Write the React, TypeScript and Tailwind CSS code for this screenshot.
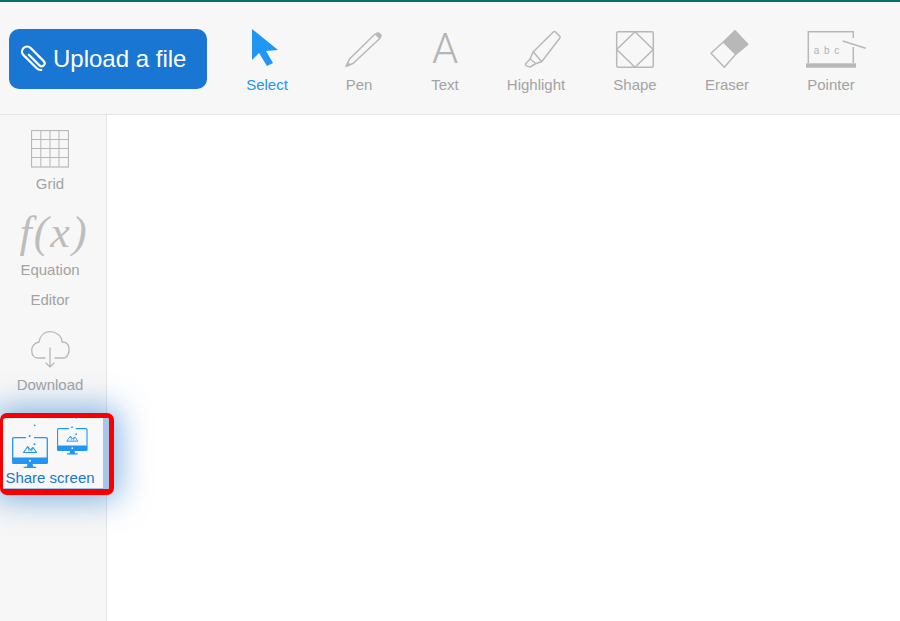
import React from "react";

const C = "#b8b8b8";

function Tool({ label, width, active, children }: { label: string; width: string; active?: boolean; children: React.ReactNode }) {
  return (
    <div className={`flex flex-col items-center shrink-0 ${width}`}>
      <div className="h-10 flex items-center justify-center">{children}</div>
      <div className={`mt-1.5 text-[15px] leading-5 ${active ? "text-[#2196f3]" : "text-[#a3a3a3]"}`}>{label}</div>
    </div>
  );
}

function Ico({ children }: { children: React.ReactNode }) {
  return (
    <svg width="60" height="40" viewBox="0 0 60 40" fill="none" className="overflow-visible">
      {children}
    </svg>
  );
}

function SideItem({ children, lines }: { children: React.ReactNode; lines: string[] }) {
  return (
    <div className="w-[100px] flex flex-col items-center">
      {children}
      {lines.map((l) => (
        <div key={l} className="text-[15px] leading-[30px] text-[#a3a3a3] text-center">
          {l}
        </div>
      ))}
    </div>
  );
}

function Monitor({ x, y, s }: { x: number; y: number; s: number }) {
  return (
    <g transform={`translate(${x} ${y}) scale(${s})`}>
      <path d="M14 0.700H2Q0.700 0.700 0.700 2V21M35.300 21V2Q35.300 0.700 34 0.700H22" stroke="#2196f3" strokeWidth="1.300" fill="none" />
      <path d="M0 20.500h36v5a1.500 1.500 0 0 1-1.500 1.500H1.500A1.500 1.500 0 0 1 0 25.500z" fill="#2196f3" />
      <circle cx="18" cy="23.700" r="1" fill="#fff" />
      <path d="M15.500 27h5l0.800 2.800h3v1.400h-12.600v-1.400h3z" fill="#2196f3" />
      <path d="M11.500 15.500l4.200-6 2.800 3.500 2.500-2.500 3.500 5z" stroke="#2196f3" strokeWidth="1.100" fill="none" strokeLinejoin="round" />
      <path d="M15.700 9.500l1.500 5M20.900 10.500l-1.500 4" stroke="#2196f3" strokeWidth="0.800" />
      <circle cx="22.500" cy="7.300" r="1" fill="#2196f3" />
      <circle cx="17.700" cy="-1" r="1" fill="#2196f3" />
      <circle cx="22.700" cy="-11.700" r="0.900" fill="#2196f3" />
    </g>
  );
}

export default function App() {
  return (
    <div className="w-[900px] h-[621px] overflow-hidden bg-white border-t-2 border-[#0d6b6c] font-['Liberation_Sans',Arial,sans-serif] flex flex-col">
      <div className="h-[113px] shrink-0 bg-[#f7f7f7] border-b border-[#e4e4e4] flex items-start pl-[9px] pt-[27px]">
        <button className="w-[198px] h-[60px] shrink-0 rounded-[10px] bg-[#1976d2] text-white text-2xl flex items-center pl-[12px] gap-[5px]">
          <svg width="27" height="28" viewBox="-13.500 -14 27 28" fill="none" stroke="#fff" strokeWidth="2.200" strokeLinecap="round">
            <g transform="rotate(-45) translate(0 -1)">
              <path d="M-1 -6V9a3 3 0 0 0 6 0V-9.500a5 5 0 0 0-10 0V9.500a5.500 5.500 0 0 0 2 4" />
            </g>
          </svg>
          <span>Upload a file</span>
        </button>
        <div className="flex ml-[15px]">
          <Tool label="Select" width="w-[90px]" active>
            <Ico>
              <path d="M15 0 L41 21 L29 22 L36 34 L30 37 L22 24 L15 31 Z" fill="#2196f3" />
            </Ico>
          </Tool>
          <Tool label="Pen" width="w-[94px]">
            <Ico>
              <path d="M17 37.500L20.300 30.300L46 5L51 9.300L24.300 34.300Z" stroke={C} strokeWidth="1.500" strokeLinejoin="round" />
              <path d="M17 37.500L19 33L21.800 35.800Z" fill={C} />
              <path d="M46.500 4.500a3 3 0 0 1 5 5z" fill={C} />
            </Ico>
          </Tool>
          <Tool label="Text" width="w-[78px]">
            <span className="font-['Roboto',sans-serif] font-light text-[42px] leading-10 text-[#b5b5b5]">A</span>
          </Tool>
          <Tool label="Highlight" width="w-[104px]">
            <Ico>
              <path d="M27.300 22.700L47.300 3Q48.500 2 49.500 3L54 7.500Q54.500 8.500 53.500 9.500L35.700 32.700Z" stroke={C} strokeWidth="1.500" strokeLinejoin="round" />
              <path d="M27.300 22.700L24 30L19.500 35Q19 37 24 38L30 34.500L35.700 32.700M24 30L30 34.500" stroke={C} strokeWidth="1.500" strokeLinejoin="round" />
            </Ico>
          </Tool>
          <Tool label="Shape" width="w-[94px]">
            <Ico>
              <rect x="11.700" y="2.700" width="36.600" height="35.600" rx="1.500" stroke={C} strokeWidth="1.500" />
              <path d="M30 2.700L48.300 20.500L30 38.300L11.700 20.500Z" stroke={C} strokeWidth="1.500" />
            </Ico>
          </Tool>
          <Tool label="Eraser" width="w-[90px]">
            <Ico>
              <path d="M38 1.700L50.700 15.300L38.700 25.300L26.300 13Z" fill={C} stroke={C} strokeWidth="1.500" strokeLinejoin="round" />
              <path d="M26.300 13L14 24.300L27.300 38.300L38.700 25.300" stroke={C} strokeWidth="1.500" strokeLinejoin="round" />
            </Ico>
          </Tool>
          <Tool label="Pointer" width="w-[118px]">
            <Ico>
              <path d="M52.300 9V2.700H7.300V34M52.300 18V34" stroke={C} strokeWidth="1.500" />
              <rect x="5" y="34.300" width="50" height="4.400" fill={C} />
              <path d="M41.700 12L64.700 19.300" stroke={C} strokeWidth="1.500" />
              <text x="26" y="25" textAnchor="middle" fontSize="10" letterSpacing="1" fill="#b0b0b0" className="font-['Liberation_Sans',sans-serif]">
                a b c
              </text>
            </Ico>
          </Tool>
        </div>
      </div>
      <div className="flex-1 flex min-h-0">
        <div className="w-[107px] shrink-0 bg-[#f7f7f7] border-r border-[#e4e4e4] flex flex-col items-start pt-[15px]">
          <SideItem lines={["Grid"]}>
            <svg width="38" height="38" viewBox="0 0 38 38" fill="none" stroke={C}>
              <rect x="0.500" y="0.500" width="37" height="36.500" strokeWidth="1.200" />
              <path d="M9.800 0V37M19 0V37M28 0V37M0 9.500H38M0 18.500H38M0 27.500H38" strokeWidth="1" />
            </svg>
            <div className="h-[1px]" />
          </SideItem>
          <SideItem lines={["Equation", "Editor"]}>
            <div className="font-['Liberation_Serif',serif] italic text-[44px] tracking-[2px] leading-[48px] mt-[10px] mb-[-2px] ml-[8px] text-[#bdbdbd] whitespace-nowrap">f(x)</div>
          </SideItem>
          <SideItem lines={["Download"]}>
            <svg width="60" height="40" viewBox="0 0 60 40" fill="none" stroke={C} strokeWidth="1.300" className="mt-[15px]">
              <path d="M35 28H43C48 28 49.500 22 49 18C48.500 13 45 12 42 12C42 5 35 1.700 30 1.700C24 1.700 20 6 19 12C14 13 11.700 17 11.700 20C11.700 25 14 28 18 28H25" strokeLinecap="round" />
              <path d="M30 18V37M26 33L30 37L34 33" strokeLinecap="round" strokeLinejoin="round" />
            </svg>
          </SideItem>
          <div className="relative z-10 w-[114px] h-[82px] shrink-0 mt-[13px] border-solid border-t-[5px] border-b-[6px] border-l-[3px] border-r-[5px] border-[#f80000] rounded-[7px] bg-[#f8f8f8] shadow-[0_0_30px_6px_rgba(25,118,210,0.5)] flex overflow-hidden">
            <div className="w-[100px] shrink-0 flex flex-col items-center pr-[6px] border-b border-[#9cc4ea]">
              <svg width="92" height="50" viewBox="0 0 92 50" fill="none" className="shrink-0">
                <Monitor x={8} y={19} s={1} />
                <Monitor x={53} y={10} s={0.85} />
              </svg>
              <div className="text-[15px] leading-5 text-[#1976d2] whitespace-nowrap">Share screen</div>
            </div>
            <div className="flex-1 bg-[#a4c6ea]" />
          </div>
        </div>
        <div className="flex-1 bg-white" />
      </div>
    </div>
  );
}
